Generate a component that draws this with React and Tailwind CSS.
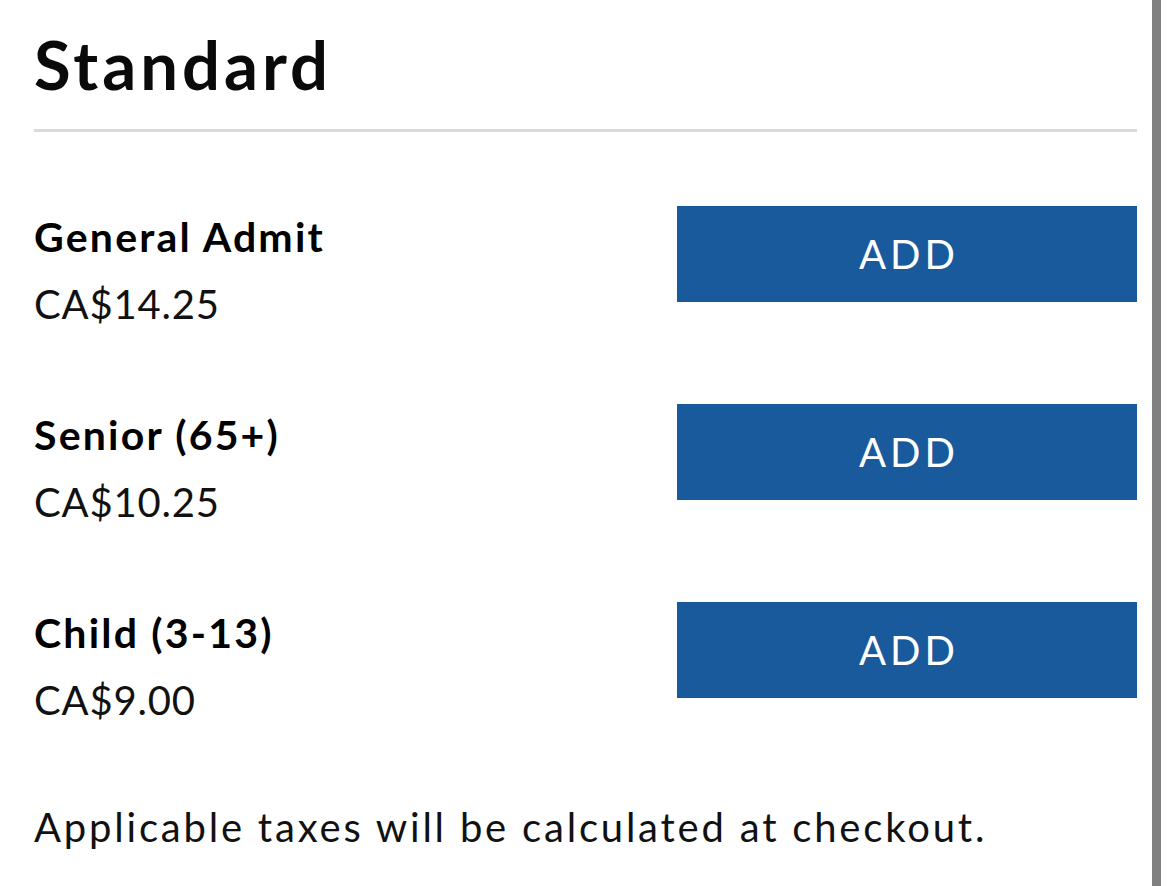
const tickets = [
  { name: 'General Admit', price: 'CA$14.25' },
  { name: 'Senior (65+)', price: 'CA$10.25' },
  { name: 'Child (3-13)', price: 'CA$9.00' },
];

function TicketRow({ name, price }) {
  return (
    <div className="flex items-start justify-between h-[198px]">
      <div className="pt-[10px]">
        <div className="text-[41px] font-bold leading-none text-black tracking-[2.2px]">{name}</div>
        <div className="mt-[27px] text-[40px] leading-none text-[#111] tracking-[0.8px]">{price}</div>
      </div>
      <button className="w-[460px] h-[96px] bg-[#185a9b] text-white text-[40px] tracking-[4px] pl-[4px] leading-none">
        ADD
      </button>
    </div>
  );
}

export default function App() {
  return (
    <div
      className="w-[1170px] h-[886px] bg-white flex overflow-hidden"
      style={{ fontFamily: 'Lato, "Noto Sans", sans-serif' }}
    >
      <div className="flex-1 pl-[34px] pr-[15px]">
        <h1 className="pt-[31px] text-[67px] font-bold leading-none text-[#0a0a0a] tracking-[4px]">Standard</h1>
        <div className="mt-[31px] h-[3px] bg-[#dadade]" />
        <div className="pt-[74px]">
          {tickets.map((t) => (
            <TicketRow key={t.name} {...t} />
          ))}
        </div>
        <p className="mt-[7px] text-[40px] leading-none text-[#111] tracking-[2.8px]">
          Applicable taxes will be calculated at checkout.
        </p>
      </div>
      <div className="w-[9px] h-full bg-[#808080]" />
      <div className="w-[9px]" />
    </div>
  );
}
